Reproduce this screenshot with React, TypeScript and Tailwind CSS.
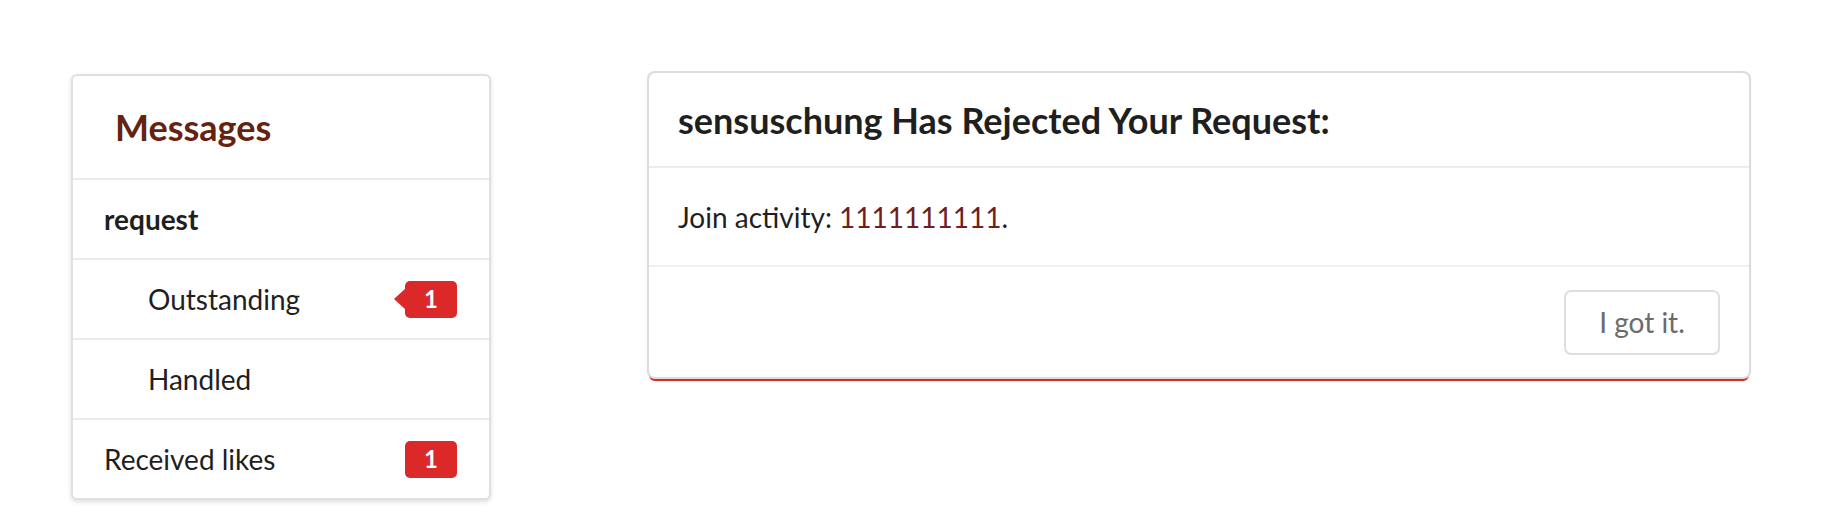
import React from "react";

function Badge({ pointing }: { pointing?: boolean }) {
  return (
    <div className="relative flex h-[37px] w-[52px] items-center justify-center rounded-[5px] bg-[#db2828] text-[24px] font-bold leading-none text-white">
      {pointing && (
        <span className="absolute left-[-11px] top-1/2 h-0 w-0 -translate-y-1/2 border-y-[11px] border-r-[12px] border-y-transparent border-r-[#db2828]" />
      )}
      1
    </div>
  );
}

export default function App() {
  return (
    <div
      className="flex h-[518px] w-[1833px] items-start bg-white pl-[71px] pt-[73px] text-[#1f1f1f]"
      style={{ fontFamily: "Lato, 'Open Sans', sans-serif" }}
    >
      {/* Left menu */}
      <div className="mt-[1px] flex w-[420px] flex-col overflow-hidden rounded-[6px] border-2 border-[#e0e0e1] bg-white shadow-[0_2px_4px_0_rgba(34,36,38,0.15)]">
        <div className="flex h-[104px] items-center border-b-2 border-[#ebebeb] pl-[42px]">
          <span className="text-[36px] font-bold leading-none text-[#662211]">Messages</span>
        </div>
        <div className="flex h-[80px] items-center border-b-2 border-[#ebebeb] pl-[31px]">
          <span className="text-[28px] font-bold leading-none">request</span>
        </div>
        <div className="flex h-[80px] items-center justify-between border-b-2 border-[#ebebeb] pl-[75px] pr-[32px]">
          <span className="text-[28px] leading-none">Outstanding</span>
          <Badge pointing />
        </div>
        <div className="flex h-[80px] items-center border-b-2 border-[#ebebeb] pl-[75px]">
          <span className="text-[28px] leading-none">Handled</span>
        </div>
        <div className="flex h-[78px] items-center justify-between pl-[31px] pr-[32px]">
          <span className="text-[28px] leading-none">Received likes</span>
          <Badge />
        </div>
      </div>

      {/* Right card */}
      <div className="ml-[158px] flex w-[1100px] flex-col rounded-[6px] bg-white shadow-[0_0_0_2px_#dcdcdd,0_4px_0_0_#db2828,0_2px_4px_0_#d4d4d5]">
        <div className="flex h-[95px] items-center border-b-2 border-[#ececec] pl-[29px]">
          <span className="text-[36px] font-bold leading-none">
            sensuschung Has Rejected Your Request:
          </span>
        </div>
        <div className="flex h-[99px] items-center border-b-2 border-[#f0f0f0] pl-[29px]">
          <span className="text-[28px] leading-none">
            Join activity: <span className="text-[#6e1f1f]">1111111111</span>.
          </span>
        </div>
        <div className="flex h-[110px] items-center justify-end pr-[29px]">
          <button className="flex h-[65px] w-[156px] items-center justify-center rounded-[7px] border-2 border-[#dedede] bg-white text-[28px] leading-none text-[#6b6b6b]">
            I got it.
          </button>
        </div>
      </div>
    </div>
  );
}
